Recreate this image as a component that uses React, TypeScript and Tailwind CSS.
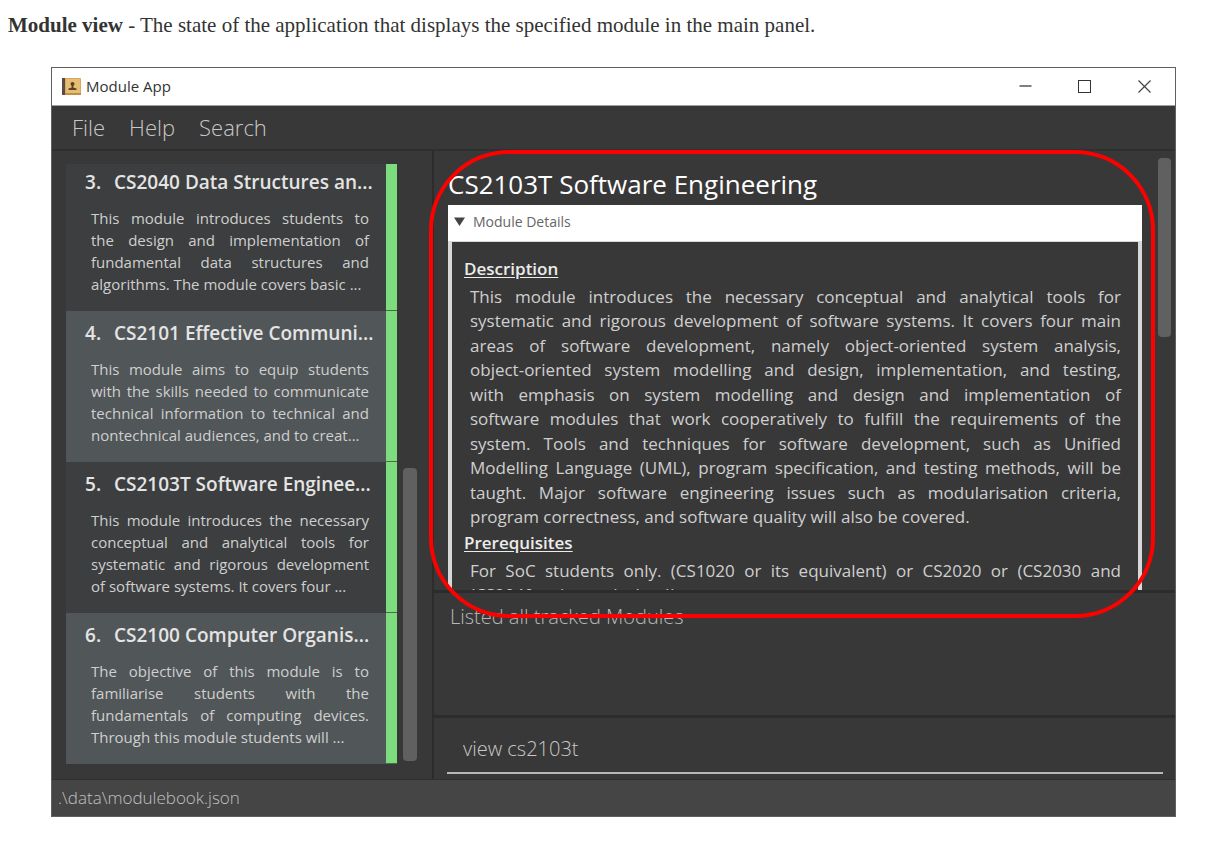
import React from "react";

type Module = { index: number; title: string; lines: string[]; last: string };

const modules: Module[] = [
  {
    index: 3,
    title: "CS2040 Data Structures an...",
    lines: [
      "This module introduces students to",
      "the design and implementation of",
      "fundamental data structures and",
    ],
    last: "algorithms. The module covers basic ...",
  },
  {
    index: 4,
    title: "CS2101 Effective Communi...",
    lines: [
      "This module aims to equip students",
      "with the skills needed to communicate",
      "technical information to technical and",
    ],
    last: "nontechnical audiences, and to creat...",
  },
  {
    index: 5,
    title: "CS2103T Software Enginee...",
    lines: [
      "This module introduces the necessary",
      "conceptual and analytical tools for",
      "systematic and rigorous development",
    ],
    last: "of software systems. It covers four ...",
  },
  {
    index: 6,
    title: "CS2100 Computer Organis...",
    lines: [
      "The objective of this module is to",
      "familiarise students with the",
      "fundamentals of computing devices.",
    ],
    last: "Through this module students will ...",
  },
];

const description = [
  "This module introduces the necessary conceptual and analytical tools for",
  "systematic and rigorous development of software systems. It covers four main",
  "areas of software development, namely object-oriented system analysis,",
  "object-oriented system modelling and design, implementation, and testing,",
  "with emphasis on system modelling and design and implementation of",
  "software modules that work cooperatively to fulfill the requirements of the",
  "system. Tools and techniques for software development, such as Unified",
  "Modelling Language (UML), program specification, and testing methods, will be",
  "taught. Major software engineering issues such as modularisation criteria,",
];

function AppIcon() {
  return (
    <svg width="19" height="17" viewBox="0 0 19 17" aria-hidden="true">
      <rect width="19" height="17" rx="1" fill="#d9a95b" />
      <rect x="4" y="1" width="14" height="14" fill="#e6bd75" />
      <rect width="3" height="17" fill="#5b4a48" />
      <rect x="3" y="15" width="16" height="2" fill="#c08e45" />
      <circle cx="10.5" cy="6" r="2" fill="#5a431f" />
      <path d="M9.7 7h1.6v2.4l3.2 1V12h-8v-1.600l3.200-1z" fill="#5a431f" />
    </svg>
  );
}

function TitleBar() {
  return (
    <header className="flex h-[38px] items-center border-b border-[#a0a0a0] bg-white pl-[10px] text-black">
      <AppIcon />
      <h1 className="ml-[5px] flex-1 text-[15px] text-[#333]">Module App</h1>
      <button aria-label="Minimize" className="flex h-full w-[59px] items-center justify-center">
        <svg width="13" height="13" viewBox="0 0 13 13" stroke="#555" fill="none">
          <path d="M0.500 6h12" strokeWidth="1.500" />
        </svg>
      </button>
      <button aria-label="Maximize" className="flex h-full w-[59px] items-center justify-center">
        <svg width="13" height="13" viewBox="0 0 13 13" stroke="#333" fill="none">
          <rect x="0.500" y="0.500" width="12" height="12" />
        </svg>
      </button>
      <button aria-label="Close" className="flex h-full w-[61px] items-center justify-center">
        <svg width="13" height="13" viewBox="0 0 13 13" stroke="#444" strokeWidth="1.200" fill="none">
          <path d="M0.500 0.500l12 12M12.500 0.500l-12 12" />
        </svg>
      </button>
    </header>
  );
}

function ModuleCard({ module }: { module: Module }) {
  return (
    <li className="group flex bg-[#3c3e3f] even:bg-[#515658]">
      <div className="min-w-0 flex-1 pt-[10px] pb-[16px] pl-[19px] group-first:pt-[6px]">
        <h3 className="flex text-[19px] leading-6 font-semibold whitespace-nowrap text-[#e4e4e4]">
          <span className="w-[29px]">{module.index}.</span>
          {module.title}
        </h3>
        <p className="mt-[13px] pr-[17px] pl-[6px] text-[15px] leading-[22px] whitespace-nowrap text-[#cfcfcf]">
          {module.lines.map((line) => (
            <span key={line} className="block text-justify [text-align-last:justify]">
              {line}
            </span>
          ))}
          <span className="block">{module.last}</span>
        </p>
      </div>
      <div className="w-[11px] border-b border-[#4b6b4b] bg-[#7ddc7d]" />
    </li>
  );
}

function ModuleList() {
  return (
    <section aria-label="Modules" className="flex w-[382px] shrink-0 border-r-2 border-[#2c2c2c] pt-[13px] pr-[15px] pl-[14px]">
      <ul className="flex-1">
        {modules.map((m) => (
          <ModuleCard key={m.index} module={m} />
        ))}
      </ul>
      <div className="ml-[6px] flex w-[14px] flex-col justify-end pb-[18px]">
        <div className="h-[293px] rounded bg-[#606060]" />
      </div>
    </section>
  );
}

function ModuleDetails() {
  return (
    <section className="relative flex h-[439px] pt-[7px] pr-1 pl-[14px]">
      <div className="min-w-0 flex-1 overflow-hidden pt-[8px]">
        <h2 className="text-[26px] leading-[36px] font-medium whitespace-nowrap text-white">
          CS2103T Software Engineering
        </h2>
        <button
          aria-expanded="true"
          className="mt-[3px] flex h-[36px] w-full items-center bg-white pb-[3px] pl-[6px] text-[14px] text-[#666]"
        >
          <svg width="11" height="9" viewBox="0 0 11 9" className="mr-[8px]" aria-hidden="true">
            <path d="M0 0.500h11L5.500 9z" fill="#444" />
          </svg>
          Module Details
        </button>
        <div className="border-x-4 border-t border-[#d8d8d8] pt-[13px] pr-[17px] pb-4 pl-[12px] whitespace-nowrap text-[#cfcfcf]">
          <h3 className="text-[17px] leading-[27px] font-semibold text-[#ececec] underline underline-offset-2">
            Description
          </h3>
          <p className="mt-[2px] pl-[6px] text-[17px] leading-6">
            {description.map((line) => (
              <span key={line} className="block text-justify [text-align-last:justify] odd:leading-[25px]">
                {line}
              </span>
            ))}
            <span className="block">program correctness, and software quality will also be covered.</span>
          </p>
          <h3 className="text-[17px] leading-[27px] font-semibold text-[#ececec] underline underline-offset-2">
            Prerequisites
          </h3>
          <p className="mt-[2px] pl-[6px] text-[17px] leading-6">
            <span className="block text-justify [text-align-last:justify] odd:leading-[25px]">
              For SoC students only. (CS1020 or its equivalent) or CS2020 or (CS2030 and
            </span>
            <span className="block">(CS2040 or its equivalent))</span>
          </p>
        </div>
      </div>
      <div className="ml-[16px] w-[13px]">
        <div className="h-[179px] rounded bg-[#606060]" />
      </div>
      <div className="pointer-events-none absolute top-[-1px] right-[20px] bottom-[-28px] left-[-5px] rounded-[80px] border-4 border-[#ff0000]" />
    </section>
  );
}

export default function App() {
  return (
    <main className="pr-[40px] pb-[27px] font-['Open_Sans','Noto_Sans',sans-serif]">
      <p className="pt-[10px] pl-2 font-['Liberation_Serif',serif] text-[21px] leading-[30px] text-[#333]">
        <strong>Module view</strong> - The state of the application that displays the specified module in the main panel.
      </p>
      <div className="mt-[27px] ml-[51px] border border-[#606060] bg-[#383838]">
        <TitleBar />
        <nav className="flex h-[45px] items-center gap-[24px] border-b-2 border-[#2f2f2f] pl-[20px] text-[22px] font-light text-[#c8c8c8]">
          <button>File</button>
          <button>Help</button>
          <button>Search</button>
        </nav>
        <div className="flex">
          <ModuleList />
          <div className="flex min-w-0 flex-1 flex-col">
            <ModuleDetails />
            <output className="block h-[128px] border-y-3 border-[#2c2c2c] px-[16px] pt-[10px] text-[20px] leading-[28px] font-light text-[#b8b8b8]">
              Listed all tracked Modules
            </output>
            <div className="pt-[7px] pr-[12px] pb-[5px] pl-[13px]">
              <input
                aria-label="Command"
                defaultValue="view cs2103t"
                className="block h-[49px] w-full border-b-2 border-[#b8b8b8] bg-transparent px-[16px] text-[20px] font-light text-[#c8c8c8] outline-none"
              />
            </div>
          </div>
        </div>
        <footer className="border-t border-[#303030] bg-[#454545] pl-[6px] text-[17px] leading-[36px] font-light text-[#c0c0c0]">
          .\data\modulebook.json
        </footer>
      </div>
    </main>
  );
}
